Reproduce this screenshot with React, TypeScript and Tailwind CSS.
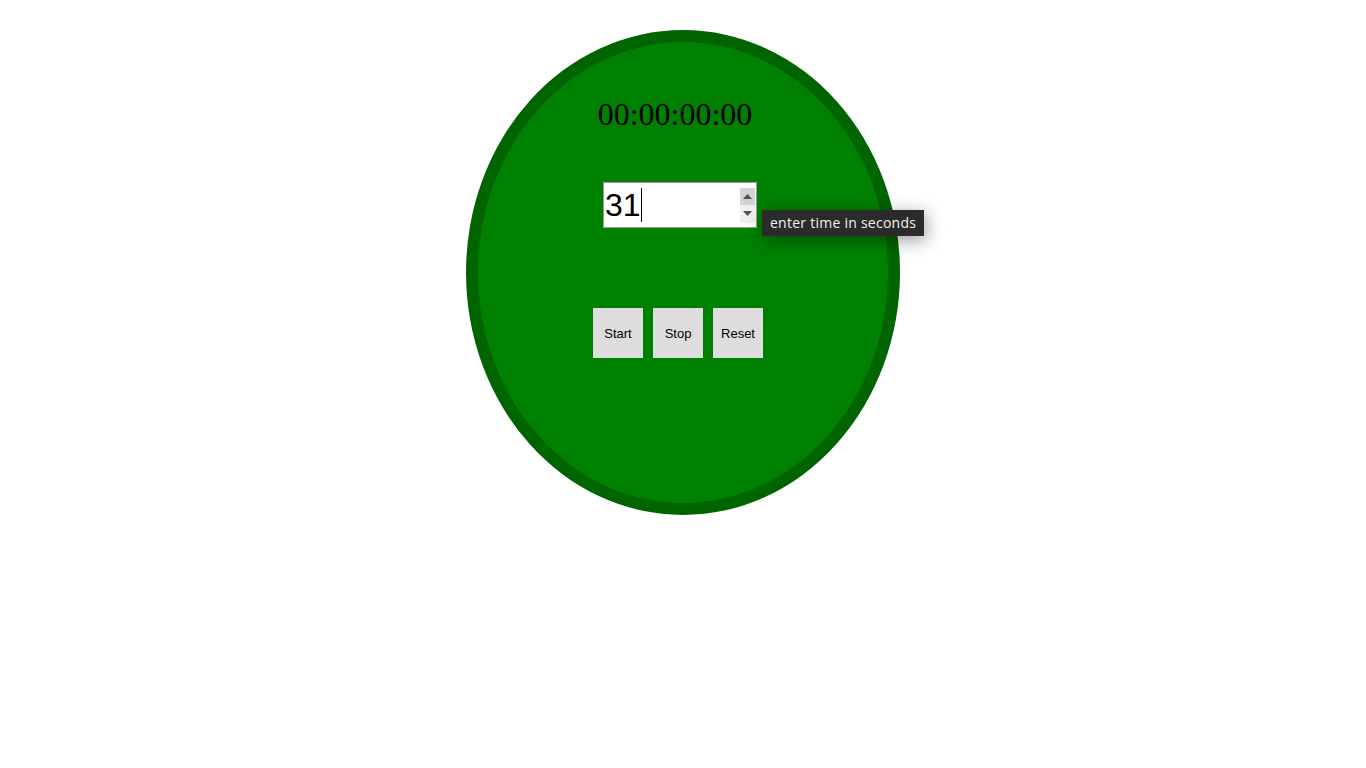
import { useState } from "react";

export default function App() {
  const [seconds] = useState("31");

  return (
    <div className="w-full min-h-[768px] bg-white pt-[30px]">
      <div className="mx-auto w-[434px] h-[485px] rounded-[50%] border-[12px] border-[#006400] bg-[#008000] flex flex-col">
        <div
          className="mt-[52px] h-[40px] leading-[40px] text-[32px] text-black text-center pr-[16px]"
          style={{ fontFamily: '"Liberation Serif", serif' }}
        >
          00:00:00:00
        </div>

        <div className="mt-[48px] flex justify-center pr-[6px]">
          <div className="relative w-[154px] h-[46px] bg-white border border-[#9a9a9a] flex items-center">
            <span
              className="pl-[1px] text-[32px] leading-none text-black"
              style={{ fontFamily: '"Liberation Sans", Arial, sans-serif' }}
            >
              {seconds}
            </span>
            <span className="w-[1px] h-[34px] bg-black" />
            <div className="ml-auto mr-[1px] flex flex-col w-[15px] h-[35px]">
              <div className="flex-1 bg-[#d3d3d3] flex items-center justify-center">
                <svg width="9" height="5" viewBox="0 0 9 5">
                  <path d="M0 5 L4.5 0 L9 5 Z" fill="#505050" />
                </svg>
              </div>
              <div className="flex-1 bg-[#f0f0f0] flex items-center justify-center">
                <svg width="9" height="5" viewBox="0 0 9 5">
                  <path d="M0 0 L4.5 5 L9 0 Z" fill="#505050" />
                </svg>
              </div>
            </div>

            <div
              className="absolute left-[158px] top-[27px] h-[26px] w-[162px] pl-[8px] bg-[#2b2b2b] text-[#f0f0f0] text-[14px] tracking-[0.25px] leading-[26px] whitespace-nowrap shadow-[2px_4px_18px_rgba(0,0,0,0.4)]"
              style={{ fontFamily: '"Open Sans", "DejaVu Sans", sans-serif' }}
            >
              enter time in seconds
            </div>
          </div>
        </div>

        <div
          className="mt-[80px] flex justify-center gap-[10px] pr-[10px]"
          style={{ fontFamily: '"Liberation Sans", Arial, sans-serif' }}
        >
          <button type="button" className="w-[50px] h-[50px] pt-[1px] bg-[#dddddd] text-[13px] text-black">
            Start
          </button>
          <button type="button" className="w-[50px] h-[50px] pt-[1px] bg-[#dddddd] text-[13px] text-black">
            Stop
          </button>
          <button type="button" className="w-[50px] h-[50px] pt-[1px] bg-[#dddddd] text-[13px] text-black">
            Reset
          </button>
        </div>
      </div>
    </div>
  );
}
